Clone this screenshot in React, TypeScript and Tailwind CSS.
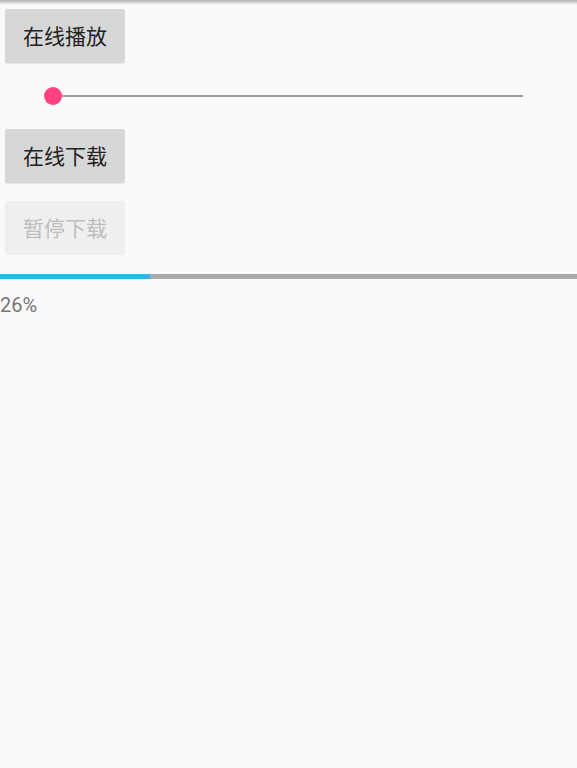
import React from "react";

const font = { fontFamily: '"Noto Sans CJK SC", "Noto Sans", Roboto, sans-serif' };

const Btn = ({ label, disabled }: { label: string; disabled?: boolean }) => (
    <button
        disabled={disabled}
        className={`w-[120px] h-[54px] rounded-[2px] text-[21px] flex items-center justify-center ${disabled ? "bg-[#efefef] text-[#bdbdbd]" : "bg-[#d6d7d7] text-[#212121] shadow-[0_1px_1px_rgba(0,0,0,0.08)]"
            }`}
        style={font}
    >
        {label}
    </button>
);

export default function App() {
    const progress = 26;
    return (
        <div className="relative w-[577px] h-[768px] bg-[#fafafa] overflow-hidden" style={font}>
            {/* top shadow */}
            <div className="absolute top-0 left-0 right-0 h-[5px] bg-gradient-to-b from-[#b0b0b0] to-transparent" />

            <div className="flex flex-col pt-[9px]">
                <div className="pl-[5px]">
                    <Btn label="在线播放" />
                </div>

                {/* seek bar */}
                <div className="h-[66px] flex items-center pl-[44px] pr-[54px]">
                    <div className="relative flex-1 h-[18px] flex items-center">
                        <div className="absolute left-[9px] right-0 h-[2px] bg-[#9e9e9e]" />
                        <div className="relative w-[18px] h-[18px] rounded-full bg-[#ff4081]" />
                    </div>
                </div>

                <div className="pl-[5px]">
                    <Btn label="在线下载" />
                </div>
                <div className="pl-[5px] mt-[18px]">
                    <Btn label="暂停下载" disabled />
                </div>

                {/* progress */}
                <div className="mt-[19px] h-[5px] bg-[#aaaaaa] flex">
                    <div className="h-full bg-[#33b5e5]" style={{ width: `${progress}%` }} />
                </div>

                <div className="mt-[13px] text-[20px] leading-[26px] text-[#757575]" style={{ fontFamily: 'Roboto, sans-serif' }}>
                    {progress}%
                </div>
            </div>
        </div>
    );
}
